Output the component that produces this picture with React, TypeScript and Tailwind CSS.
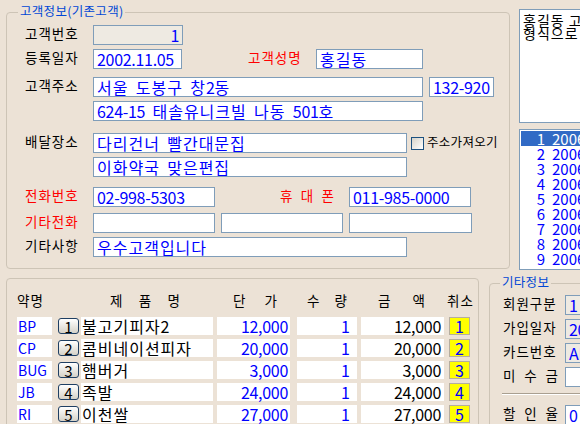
import React from "react";

function T({ text }: { text: string }) {
  const parts = text.split(/([가-힣]+)/).filter((p) => p.length > 0);
  return (
    <>
      {parts.map((p, i) =>
        /[가-힣]/.test(p) ? (
          <span key={i} className="tracking-[1px]">{p}</span>
        ) : (
          <span key={i} className="tracking-[-0.3px] whitespace-pre">{p}</span>
        )
      )}
    </>
  );
}

type BoxProps = {
  w: string;
  bg?: string;
  color?: string;
  align?: string;
  extra?: string;
  text?: string;
};

function Box({ w, bg = "bg-white", color = "text-[#0000ff]", align = "justify-start", extra = "", text }: BoxProps) {
  return (
    <div
      className={`${w} ${bg} ${color} ${align} ${extra} h-[20px] shrink-0 border border-[#7f9db9] flex items-center px-[3px] text-[16px] leading-none whitespace-nowrap [word-spacing:4px]`}
    >
      {text ? <T text={text} /> : null}
    </div>
  );
}

function Label({ children, red = false, w = "w-[68px]" }: { children: React.ReactNode; red?: boolean; w?: string }) {
  return (
    <div
      className={`${w} ${red ? "text-[#ff0000]" : "text-black"} shrink-0 text-[13.5px] tracking-[1px] leading-none whitespace-nowrap -mt-[2px]`}
    >
      {children}
    </div>
  );
}

function Spread({ text, w, color = "text-black", extra = "" }: { text: string; w: string; color?: string; extra?: string }) {
  return (
    <div className={`${w} ${color} ${extra} shrink-0 flex justify-between text-[13.5px] leading-none -mt-[2px]`}>
      {text.split("").map((c, i) => (
        <span key={i}>{c}</span>
      ))}
    </div>
  );
}

const items = [
  { code: "BP", name: "불고기피자2", price: "12,000", qty: "1", amt: "12,000" },
  { code: "CP", name: "콤비네이션피자", price: "20,000", qty: "1", amt: "20,000" },
  { code: "BUG", name: "햄버거", price: "3,000", qty: "1", amt: "3,000" },
  { code: "JB", name: "족발", price: "24,000", qty: "1", amt: "24,000" },
  { code: "RI", name: "이천쌀", price: "27,000", qty: "1", amt: "27,000" },
];

const listRows = [
  "2006-03-15 홍길동",
  "2006-03-14 홍길동",
  "2006-03-12 홍길동",
  "2006-03-10 홍길동",
  "2006-03-08 홍길동",
  "2006-03-05 홍길동",
  "2006-03-03 홍길동",
  "2006-03-02 홍길동",
  "2006-03-01 홍길동",
];

export default function App() {
  return (
    <div className="w-[580px] h-[424px] overflow-hidden bg-[#ece2d6] font-['Noto_Sans_CJK_KR','Noto_Sans',sans-serif] text-black select-none">
      {/* top section */}
      <div className="flex items-start pl-[6px] pt-[9px] gap-[9px]">
        {/* customer group */}
        <div className="relative mt-[3px] w-[504px] h-[257px] shrink-0 border border-[#cdc4b6] rounded-[4px] pt-[12px] pl-[18px]">
          <span className="absolute left-[11px] -top-[10px] px-[2px] bg-[#ece2d6] text-[#0046d5] text-[12.5px] tracking-[0.3px] leading-[16px] whitespace-nowrap">
            고객정보(기존고객)
          </span>

          <div className="flex items-center">
            <Label>고객번호</Label>
            <Box w="w-[90px]" bg="bg-[#eeeae2]" align="justify-end" text="1" />
          </div>

          <div className="flex items-center mt-[4px]">
            <Label>등록일자</Label>
            <Box w="w-[89px]" text="2002.11.05" />
            <div className="ml-[66px]">
              <Label red>고객성명</Label>
            </div>
            <Box w="w-[107px]" text="홍길동" />
          </div>

          <div className="flex items-center mt-[8px]">
            <Label>고객주소</Label>
            <Box w="w-[330px]" text="서울 도봉구 창2동" />
            <Box w="w-[65px]" extra="ml-[6px]" text="132-920" />
          </div>

          <div className="flex items-center mt-[4px]">
            <div className="w-[68px] shrink-0" />
            <Box w="w-[330px]" text="624-15 태솔유니크빌 나동 501호" />
          </div>

          <div className="flex items-center mt-[12px]">
            <Label>배달장소</Label>
            <Box w="w-[314px]" text="다리건너 빨간대문집" />
            <div className="ml-[4px] w-[13px] h-[13px] shrink-0 border border-[#1c5180] bg-gradient-to-br from-[#d6d3ca] to-white" />
            <div className="ml-[3px] text-[12.5px] tracking-[0.3px] leading-none whitespace-nowrap -mt-[1px]">주소가져오기</div>
          </div>

          <div className="flex items-center mt-[4px]">
            <div className="w-[68px] shrink-0" />
            <Box w="w-[314px]" text="이화약국 맞은편집" />
          </div>

          <div className="flex items-center mt-[10px]">
            <Label red>전화번호</Label>
            <Box w="w-[122px]" text="02-998-5303" />
            <Spread text="휴대폰" w="w-[54px]" color="text-[#ff0000]" extra="ml-[65px]" />
            <Box w="w-[122px]" extra="ml-[15px]" text="011-985-0000" />
          </div>

          <div className="flex items-center mt-[6px]">
            <Label red>기타전화</Label>
            <Box w="w-[122px]" />
            <Box w="w-[122px]" extra="ml-[6px]" />
            <Box w="w-[123px]" extra="ml-[6px]" />
          </div>

          <div className="flex items-center mt-[4px]">
            <Label>기타사항</Label>
            <Box w="w-[314px]" text="우수고객입니다" />
          </div>
        </div>

        {/* right column */}
        <div className="w-[140px] shrink-0 flex flex-col">
          <div className="h-[114px] border border-[#7f9db9] bg-white pt-[4px] pl-[3px] text-[14px] tracking-[1px] leading-[13px] whitespace-nowrap text-black">
            <div>홍길동 고객의 메모</div>
            <div>형식으로 입력합니다</div>
          </div>
          <div className="mt-[6px] h-[141px] border border-[#7f9db9] bg-white p-[1px] text-[15px] leading-none">
            {listRows.map((r, i) => (
              <div
                key={i}
                className={`h-[15px] flex items-center whitespace-nowrap ${i === 0 ? "bg-[#316ac5] text-white" : "text-[#0000ff]"}`}
              >
                <span className="w-[24px] text-right shrink-0">{i + 1}</span>
                <span className="ml-[7px]">{r}</span>
              </div>
            ))}
          </div>
        </div>
      </div>

      {/* bottom section */}
      <div className="flex items-start pl-[6px] mt-[8px] gap-[10px]">
        {/* order group */}
        <div className="w-[473px] h-[200px] shrink-0 border border-[#cdc4b6] rounded-[4px] pt-[15px] pl-[10px]">
          <div className="h-[16px] flex items-center">
            <div className="w-[93px] shrink-0 text-[13.5px] tracking-[1px] leading-none -mt-[2px]">약명</div>
            <Spread text="제품명" w="w-[70px]" />
            <Spread text="단가" w="w-[44px]" extra="ml-[53px]" />
            <Spread text="수량" w="w-[40px]" extra="ml-[30px]" />
            <Spread text="금액" w="w-[47px]" extra="ml-[31px]" />
            <div className="ml-[22px] text-[13.5px] tracking-[1px] leading-none -mt-[2px]">취소</div>
          </div>

          <div className="mt-[7px] flex flex-col gap-[4px]">
            {items.map((it, i) => (
              <div key={i} className="h-[18px] flex items-center text-[16px] leading-none whitespace-nowrap">
                <div className="w-[35px] h-[18px] shrink-0 bg-white text-[#0000ff] text-[14px] flex items-center pl-[1px]">
                  {it.code}
                </div>
                <div className="ml-[6px] w-[21px] h-[16px] shrink-0 rounded-[3px] border border-[#1f3f63] bg-gradient-to-b from-white to-[#d6d2c8] flex items-center justify-center text-[15px] text-black">
                  {i + 1}
                </div>
                <div className="ml-[2px] w-[132px] h-[18px] shrink-0 bg-white text-black flex items-center pl-[1px]">
                  <T text={it.name} />
                </div>
                <div className="ml-[4px] w-[73px] h-[18px] shrink-0 bg-white text-[#0000ff] tracking-[-0.3px] flex items-center justify-end pr-[2px]">
                  {it.price}
                </div>
                <div className="ml-[7px] w-[60px] h-[18px] shrink-0 bg-white text-[#0000ff] flex items-center justify-end pr-[7px]">
                  {it.qty}
                </div>
                <div className="ml-[4px] w-[83px] h-[18px] shrink-0 bg-white text-black tracking-[-0.3px] flex items-center justify-end pr-[3px]">
                  {it.amt}
                </div>
                <div className="ml-[5px] w-[21px] h-[18px] shrink-0 bg-[#ffff00] border border-[#b5ad9f] text-[#0000ff] flex items-center justify-center">
                  {i + 1}
                </div>
              </div>
            ))}
          </div>
        </div>

        {/* extra info group */}
        <div className="relative mt-[5px] w-[120px] h-[200px] shrink-0 border border-[#cdc4b6] rounded-[4px] pt-[11px] pl-[13px]">
          <span className="absolute left-[10px] -top-[10px] px-[2px] bg-[#ece2d6] text-[#0046d5] text-[12.5px] tracking-[0.3px] leading-[16px] whitespace-nowrap">
            기타정보
          </span>
          <div className="flex items-center">
            <Label w="w-[62px]">회원구분</Label>
            <Box w="w-[60px]" bg="bg-[#eeeae2]" text="1" />
          </div>
          <div className="flex items-center mt-[4px]">
            <Label w="w-[62px]">가입일자</Label>
            <Box w="w-[60px]" bg="bg-[#eeeae2]" text="2006.03.15" />
          </div>
          <div className="flex items-center mt-[4px]">
            <Label w="w-[62px]">카드번호</Label>
            <Box w="w-[60px]" bg="bg-[#eeeae2]" text="AE1234" />
          </div>
          <div className="flex items-center mt-[4px]">
            <Spread text="미수금" w="w-[55px]" />
            <Box w="w-[60px]" extra="ml-[7px]" />
          </div>
          <div className="mt-[6px] -ml-[1px] h-0 border-t border-t-[#a99f90] border-b border-b-white" />
          <div className="flex items-center mt-[10px]">
            <Spread text="할인율" w="w-[55px]" />
            <Box w="w-[60px]" extra="ml-[7px]" text="0" />
          </div>
        </div>
      </div>
    </div>
  );
}
